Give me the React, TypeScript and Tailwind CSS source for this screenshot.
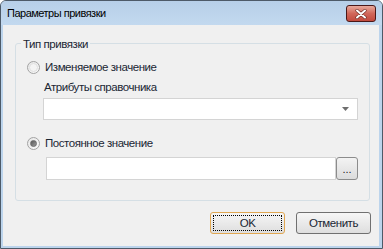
import React from "react";

const font = { fontFamily: '"Liberation Sans", Arial, sans-serif' };

function Radio({ checked }: { checked?: boolean }) {
  return (
    <div className="w-[13px] h-[13px] rounded-full border border-[#a3a3a3] bg-gradient-to-br from-[#e6e6e6] to-[#fbfbfb] flex items-center justify-center shrink-0">
      {checked ? (
        <div className="w-[7px] h-[7px] rounded-full bg-gradient-to-br from-[#5a5a5a] to-[#9a9a9a] border border-[#6a6a6a]" />
      ) : (
        <div className="w-[9px] h-[9px] rounded-full border border-[#e0e0e0] bg-[#f4f4f4]" />
      )}
    </div>
  );
}

export default function App() {
  return (
    <div
      className="w-[383px] h-[249px] border border-[#4d5a68] rounded-t-[6px] bg-[#bcd4ec] flex flex-col text-[11.5px] tracking-[-0.45px] leading-[16px] text-[#1a2633] overflow-hidden"
      style={font}
    >
      {/* Title bar */}
      <div className="h-[24px] shrink-0 flex items-start justify-between pl-[6px] pr-[6px] bg-gradient-to-b from-[#b7cfe8] to-[#c3d9ef]">
        <div className="pt-[3px] text-[11px] tracking-[-0.5px] leading-[18px] text-[#000]">Параметры привязки</div>
        <div className="mt-[4px] w-[30px] h-[17px] rounded-[3px] border border-[#4a1818] bg-gradient-to-b from-[#e7a99c] via-[#d1675a] to-[#c24a3e] flex items-center justify-center">
          <svg width="12" height="10" viewBox="0 0 12 10">
            <path d="M2 1.5 L10 8.5 M10 1.5 L2 8.5" stroke="#6b2a22" strokeWidth="3.2" strokeLinecap="round" />
            <path d="M2 1.5 L10 8.5 M10 1.5 L2 8.5" stroke="#ffffff" strokeWidth="2" strokeLinecap="round" />
          </svg>
        </div>
      </div>
      {/* Content */}
      <div className="flex-1 ml-[2px] mr-[3px] mb-[2px] bg-[#f0f0f0] flex flex-col">
        <div className="mt-[18px] ml-[12px] w-[355px] h-[158px] border border-[#d5dfe5] rounded-[3px] flex flex-col">
          <div className="self-start -mt-[8px] ml-[5px] px-[2px] bg-[#f0f0f0] h-[16px]">Тип привязки</div>
          <div className="mt-[7px] h-[16px] pl-[11px] flex items-center gap-[5px]">
            <Radio />
            <span>Изменяемое значение</span>
          </div>
          <div className="mt-[4px] h-[16px] pl-[28px]">Атрибуты справочника</div>
          <div className="mt-[3px] ml-[27px] w-[315px] h-[22px] border border-[#d4d4d4] bg-white flex items-center justify-end pr-[8px]">
            <svg width="7" height="4" viewBox="0 0 7 4">
              <path d="M0 0 H7 L3.5 4 Z" fill="#6e6e6e" />
            </svg>
          </div>
          <div className="mt-[15px] h-[16px] pl-[11px] flex items-center gap-[5px]">
            <Radio checked />
            <span>Постоянное значение</span>
          </div>
          <div className="mt-[6px] ml-[30px] h-[23px] flex">
            <div className="w-[290px] h-[23px] border border-[#d4d4d4] bg-white" />
            <div className="w-[22px] h-[23px] rounded-[3px] border border-[#8c8c8c] bg-gradient-to-b from-[#f3f3f3] to-[#dcdcdc] flex items-end justify-center pb-[4px] text-[11px] leading-[11px] tracking-[0px] text-[#222]">
              ...
            </div>
          </div>
        </div>
        <div className="mt-[11px] flex justify-end gap-[11px] pr-[8px]">
          <div className="w-[75px] h-[22px] rounded-[3px] border border-[#e0a752] bg-gradient-to-b from-[#f6f6f6] to-[#dedede] p-[2px]">
            <div className="w-full h-full border border-dotted border-[#000] flex items-center justify-center leading-[14px]">
              OK
            </div>
          </div>
          <div className="w-[75px] h-[22px] rounded-[3px] border border-[#707070] bg-gradient-to-b from-[#f6f6f6] to-[#dedede] flex items-center justify-center">
            Отменить
          </div>
        </div>
      </div>
    </div>
  );
}
